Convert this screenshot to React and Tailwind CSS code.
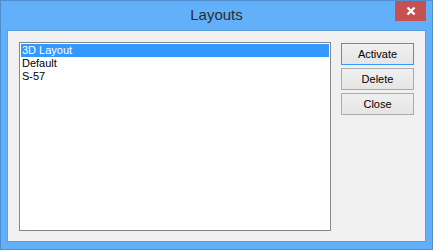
const FONT = { fontFamily: '"Liberation Sans", Arial, sans-serif' };

const items = ["3D Layout", "Default", "S-57"];

function Btn({ label, focused }) {
  return (
    <button
      type="button"
      className={`h-[22px] w-[73px] border text-[11px] text-black bg-gradient-to-b from-[#f0f0f0] to-[#e5e5e5] ${
        focused ? "border-[#3399ff]" : "border-[#acacac]"
      }`}
    >
      {label}
    </button>
  );
}

export default function App() {
  return (
    <div
      style={FONT}
      className="w-[433px] h-[250px] bg-[#63b0fa] border border-[#4f8fd0] flex flex-col relative"
    >
      {/* Title bar */}
      <div className="h-[29px] flex items-center justify-center">
        <span className="text-[15px] text-[#2b2b2b] -mt-[1px]">Layouts</span>
      </div>
      <div className="absolute top-0 right-[6px] w-[31px] h-[20px] bg-[#c75050] flex items-center justify-center">
        <svg width="10" height="10" viewBox="0 0 10 10">
          <path d="M1.5 1.5 L8.5 8.5 M8.5 1.5 L1.5 8.5" stroke="#fff" strokeWidth="2.4" />
        </svg>
      </div>

      {/* Client area */}
      <div className="mx-[6px] mb-[7px] flex-1 bg-[#f0f0f0] border border-[#5e9fe0] flex pt-[11px] pl-[11px] pr-[10px] gap-[10px]">
        <div className="w-[312px] h-[189px] bg-white border border-[#828790] p-[1px]">
          {items.map((it, i) => (
            <div
              key={it}
              className={`h-[13px] leading-[13px] text-[11px] pl-[1px] ${
                i === 0 ? "bg-[#3399ff] text-white" : "text-black"
              }`}
            >
              {it}
            </div>
          ))}
        </div>
        <div className="flex flex-col gap-[3px] mt-[1px]">
          <Btn label="Activate" focused />
          <Btn label="Delete" />
          <Btn label="Close" />
        </div>
      </div>
    </div>
  );
}
